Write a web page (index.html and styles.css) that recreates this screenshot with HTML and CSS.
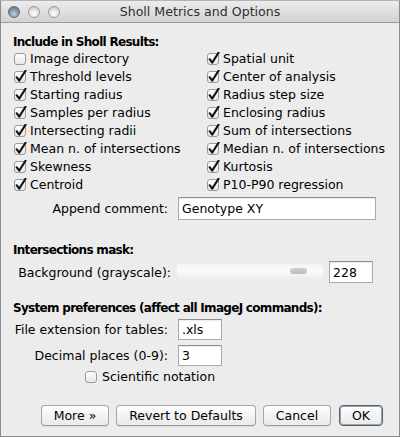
FILE: index.html
```html
<!DOCTYPE html>
<html>
<head>
<meta charset="utf-8">
<link rel="stylesheet" href="styles.css">
</head>
<body>
<svg class="defs" width="0" height="0" aria-hidden="true">
  <defs>
    <linearGradient id="boxg" x1="0" y1="0" x2="0" y2="1">
      <stop offset="0" stop-color="#ffffff"/>
      <stop offset="1" stop-color="#e6e6e6"/>
    </linearGradient>
    <symbol id="box" viewBox="0 0 14 14">
      <rect x="1.5" y="1.5" width="11" height="11" rx="2.5" fill="url(#boxg)" stroke="#9a9a9a" stroke-width="1"/>
    </symbol>
    <symbol id="chk" viewBox="0 0 14 14">
      <rect x="1.5" y="1.5" width="11" height="11" rx="2.5" fill="url(#boxg)" stroke="#9a9a9a" stroke-width="1"/>
      <path d="M3.6 7.2 L6.2 10.6 L12.6 0.6" fill="none" stroke="#111" stroke-width="2" stroke-linecap="round" stroke-linejoin="round"/>
    </symbol>
  </defs>
</svg>
<div class="window">
  <div class="titlebar">
    <div class="lights">
      <span class="light graphite"></span>
      <span class="light"></span>
      <span class="light"></span>
    </div>
    <div class="title">Sholl Metrics and Options</div>
    <div></div>
  </div>
  <div class="content">
    <div class="heading">Include in Sholl Results:</div>
    <div class="checks">
      <div class="check"><svg class="cb"><use href="#box"/></svg><span>Image directory</span></div>
      <div class="check"><svg class="cb"><use href="#chk"/></svg><span>Spatial unit</span></div>
      <div class="check"><svg class="cb"><use href="#chk"/></svg><span>Threshold levels</span></div>
      <div class="check"><svg class="cb"><use href="#chk"/></svg><span>Center of analysis</span></div>
      <div class="check"><svg class="cb"><use href="#chk"/></svg><span>Starting radius</span></div>
      <div class="check"><svg class="cb"><use href="#chk"/></svg><span>Radius step size</span></div>
      <div class="check"><svg class="cb"><use href="#chk"/></svg><span>Samples per radius</span></div>
      <div class="check"><svg class="cb"><use href="#chk"/></svg><span>Enclosing radius</span></div>
      <div class="check"><svg class="cb"><use href="#chk"/></svg><span>Intersecting radii</span></div>
      <div class="check"><svg class="cb"><use href="#chk"/></svg><span>Sum of intersections</span></div>
      <div class="check"><svg class="cb"><use href="#chk"/></svg><span>Mean n. of intersections</span></div>
      <div class="check"><svg class="cb"><use href="#chk"/></svg><span>Median n. of intersections</span></div>
      <div class="check"><svg class="cb"><use href="#chk"/></svg><span>Skewness</span></div>
      <div class="check"><svg class="cb"><use href="#chk"/></svg><span>Kurtosis</span></div>
      <div class="check"><svg class="cb"><use href="#chk"/></svg><span>Centroid</span></div>
      <div class="check"><svg class="cb"><use href="#chk"/></svg><span>P10-P90 regression</span></div>
    </div>

    <div class="row row-append">
      <span class="label">Append comment:</span>
      <span class="field field-wide">Genotype XY</span>
    </div>

    <div class="heading heading-mask">Intersections mask:</div>
    <div class="row row-bg">
      <span class="label label-bg">Background (grayscale):</span>
      <span class="slider"><span class="thumb"></span></span>
      <span class="field field-num">228</span>
    </div>

    <div class="heading heading-sys">System preferences (affect all ImageJ commands):</div>
    <div class="row row-ext">
      <span class="label">File extension for tables:</span>
      <span class="field field-small">.xls</span>
    </div>
    <div class="row row-dec">
      <span class="label">Decimal places (0-9):</span>
      <span class="field field-small">3</span>
    </div>
    <div class="check check-sci"><svg class="cb"><use href="#box"/></svg><span>Scientific notation</span></div>

    <div class="buttons">
      <button class="btn btn-more">More »</button>
      <button class="btn btn-revert">Revert to Defaults</button>
      <button class="btn btn-cancel">Cancel</button>
      <button class="btn btn-ok">OK</button>
    </div>
  </div>
</div>
</body>
</html>
```

FILE: styles.css
```css
html, body {
  margin: 0;
  padding: 0;
  background: #ececec;
}
.defs {
  position: absolute;
  width: 0;
  height: 0;
}
.window {
  box-sizing: border-box;
  width: 400px;
  height: 437px;
  background: #ececec;
  border: 1px solid #8c8c8c;
  border-top-color: #b4b4b4;
  font-family: "DejaVu Sans", sans-serif;
  font-size: 12.5px;
  color: #000;
}
.titlebar {
  box-sizing: border-box;
  height: 22px;
  border-bottom: 1px solid #9c9c9c;
  background: linear-gradient(#ececec, #d2d2d2);
  display: grid;
  grid-template-columns: 1fr auto 1fr;
  align-items: center;
}
.lights {
  display: flex;
  gap: 8px;
  padding-left: 7px;
  padding-top: 1px;
}
.light {
  box-sizing: border-box;
  width: 12px;
  height: 12px;
  border-radius: 50%;
  border: 1px solid #9a9a9a;
  background: radial-gradient(circle at 50% 70%, #ffffff 0%, #e6e6e6 45%, #bdbdbd 100%);
}
.light.graphite {
  border-color: #5d6a78;
  background: radial-gradient(circle at 50% 70%, #c6d2de 0%, #8a9bad 45%, #5f6f80 100%);
}
.title {
  font-size: 12.6px;
  color: #2e2e2e;
  line-height: 20px;
}
.content {
  padding: 11px 16px 0 12px;
}
.heading {
  font-weight: bold;
  font-size: 12px;
  letter-spacing: -0.7px;
  line-height: 16px;
}
.checks {
  display: grid;
  grid-template-columns: 193px 1fr;
  grid-auto-rows: 18px;
  padding-left: 1px;
}
.check {
  display: flex;
  align-items: center;
  gap: 3px;
  white-space: nowrap;
  line-height: 18px;
}
.cb {
  width: 14px;
  height: 14px;
  margin-left: -1px;
  flex: none;
}
.row {
  display: flex;
  align-items: center;
}
.label {
  box-sizing: border-box;
  width: 155px;
  text-align: right;
  margin-right: 10px;
  white-space: nowrap;
}
.label-bg {
  width: 158px;
  margin-right: 6px;
}
.field {
  box-sizing: border-box;
  background: #fff;
  border: 1px solid #a9a9a9;
  border-top-color: #8e8e8e;
  box-shadow: inset 0 1px 1px rgba(0,0,0,0.08);
  padding-left: 3px;
  display: flex;
  align-items: center;
}
.row-append {
  margin-top: 3px;
}
.field-wide {
  width: 198px;
  height: 23px;
}
.heading-mask {
  margin-top: 22px;
}
.row-bg {
  margin-top: 3px;
}
.slider {
  position: relative;
  width: 146px;
  height: 14px;
  background: linear-gradient(#f3f3f3, #fbfbfb 50%, #eeeeee);
  margin-right: 6px;
  margin-top: -2px;
}
.thumb {
  position: absolute;
  left: 113px;
  top: 4px;
  width: 17px;
  height: 6px;
  border-radius: 3px;
  background: linear-gradient(#d0d0d0, #bcbcbc);
}
.field-num {
  width: 44px;
  height: 22px;
}
.heading-sys {
  margin-top: 17px;
}
.row-ext {
  margin-top: 3px;
}
.row-dec {
  margin-top: 5px;
}
.field-small {
  width: 44px;
  height: 21px;
}
.check-sci {
  margin-top: 2px;
  margin-left: 72px;
  height: 18px;
  gap: 4px;
}
.buttons {
  margin-top: 19px;
  display: flex;
  justify-content: flex-end;
  gap: 7px;
}
.btn {
  box-sizing: border-box;
  height: 21px;
  font-family: "DejaVu Sans", sans-serif;
  font-size: 12.5px;
  color: #000;
  background: linear-gradient(#ffffff, #f3f3f3 50%, #eaeaea);
  border: 1px solid #a6a6a6;
  border-bottom-color: #9a9a9a;
  border-radius: 4px;
  box-shadow: 0 1px 0 rgba(0,0,0,0.06);
  padding: 0;
  line-height: 19px;
}
.btn-more { width: 68px; }
.btn-revert { width: 140px; }
.btn-cancel { width: 68px; }
.btn-ok {
  width: 44px;
  margin-left: 1px;
  border: 1px solid #56606a;
  box-shadow: inset 0 0 0 1px #9aa6b2;
}
```
